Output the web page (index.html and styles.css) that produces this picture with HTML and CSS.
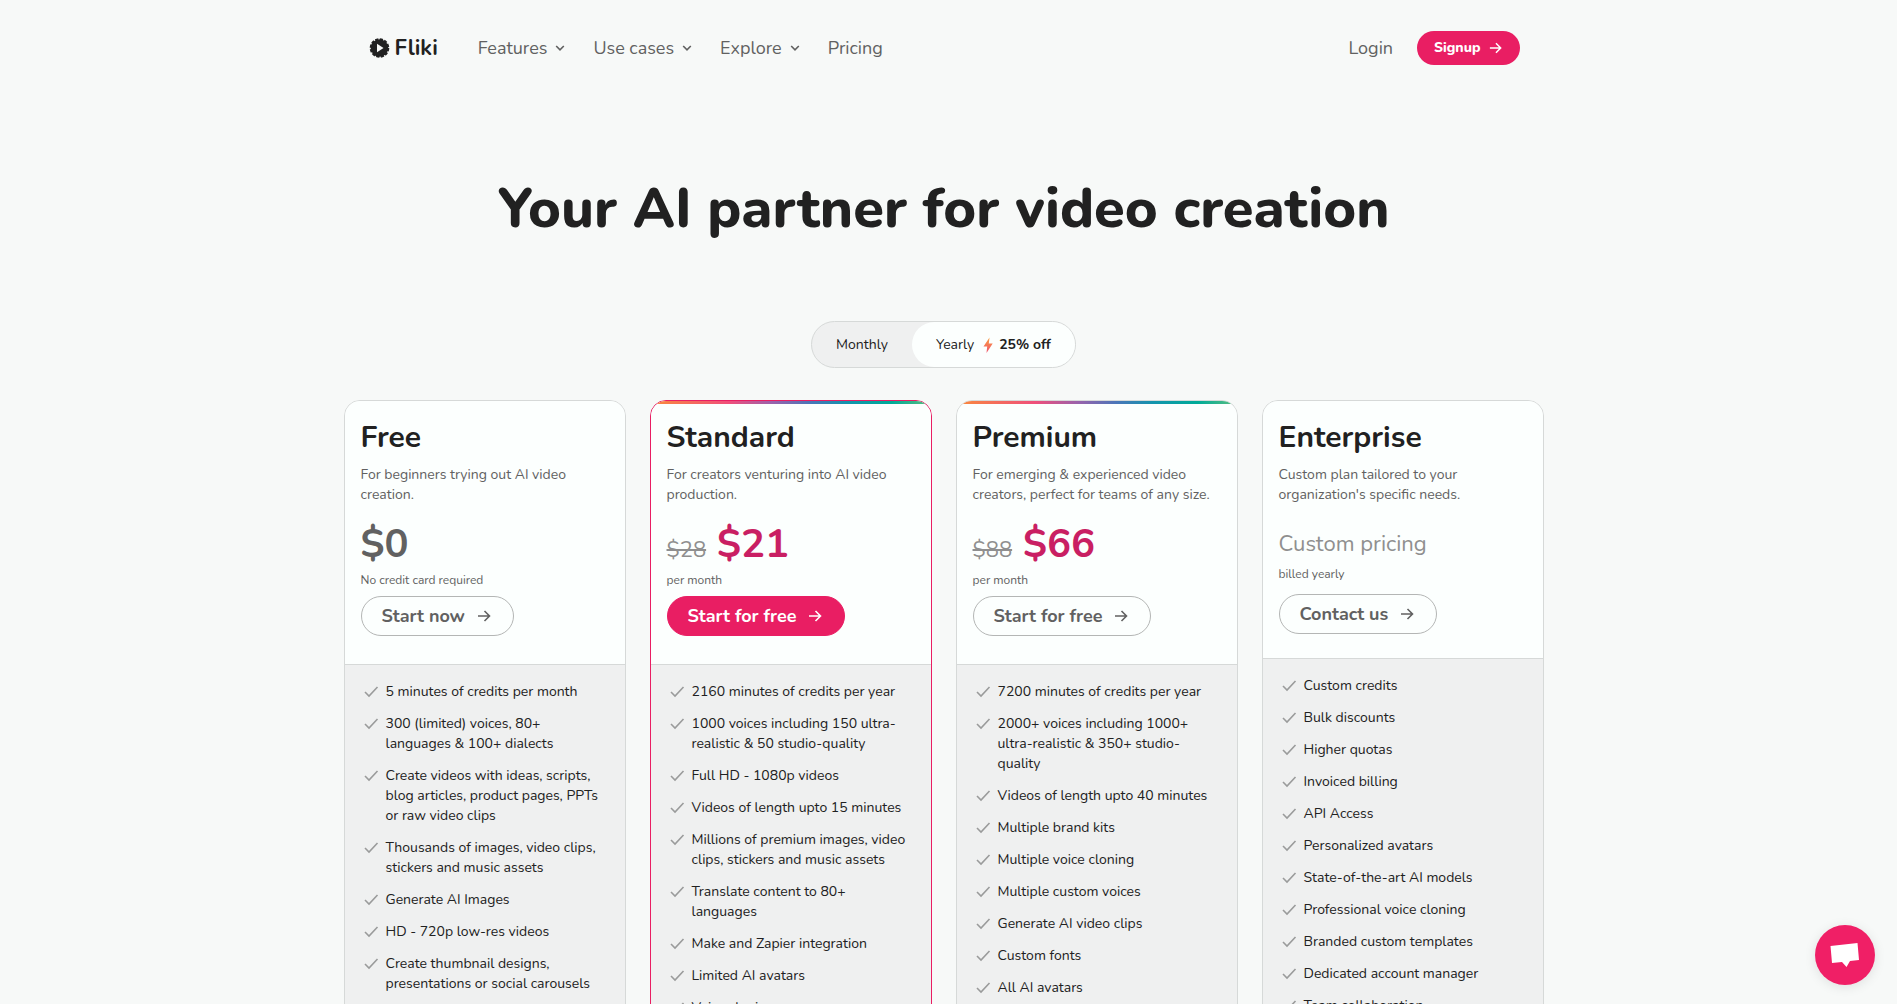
FILE: index.html
```html
<!DOCTYPE html>
<html lang="en">
<head>
  <meta charset="UTF-8">
  <title>Pricing - Fliki</title>
  <meta name="viewport" content="width=device-width, initial-scale=1.0">
  <link rel="stylesheet" href="styles.css">
</head>
<body>
  <!-- shared icons -->
  <svg class="sprite" aria-hidden="true">
    <symbol id="check" viewBox="0 0 20 20"><path d="M4 10 8 14 16.500 5" /></symbol>
    <symbol id="arrow" viewBox="0 0 16 16"><path d="M2 8H13.500M8.500 3l5 5-5 5" /></symbol>
    <symbol id="caret" viewBox="0 0 16 16"><path d="M4.200 6 8 9.800 11.800 6" /></symbol>
  </svg>

  <header class="header">
    <a class="logo" href="#">
      <svg viewBox="0 0 22 22" aria-hidden="true">
        <circle cx="11.500" cy="11" r="8.800" fill="#212121" />
        <circle cx="11.500" cy="11" r="8.800" fill="none" stroke="#212121" stroke-width="2" stroke-dasharray="3.200 1.408" />
        <path d="M9 6.800v8.400l6.500-4.200z" fill="#f7f9f8" />
      </svg>
      Fliki
    </a>
    <nav class="nav">
      <a href="#">Features <svg class="icon"><use href="#caret" /></svg></a>
      <a href="#">Use cases <svg class="icon"><use href="#caret" /></svg></a>
      <a href="#">Explore <svg class="icon"><use href="#caret" /></svg></a>
      <a href="#">Pricing</a>
    </nav>
    <div class="account">
      <a class="login" href="#">Login</a>
      <a class="signup" href="#">Signup <svg class="icon"><use href="#arrow" /></svg></a>
    </div>
  </header>

  <main>
    <h1>Your AI partner for video creation</h1>

    <div class="toggle">
      <button type="button" aria-pressed="false">Monthly</button>
      <button type="button" class="active" aria-pressed="true">
        Yearly
        <svg class="bolt" viewBox="0 0 10 16" aria-hidden="true">
          <defs>
            <linearGradient id="flame" x1="0" y1="0" x2="0" y2="1">
              <stop offset="0" stop-color="#f9a03f" />
              <stop offset="1" stop-color="#f0506e" />
            </linearGradient>
          </defs>
          <path d="M6.500 0.500 0.500 9.500H4.200L3.500 16 9.700 6.500H5.800z" fill="url(#flame)" />
        </svg>
        <b>25% off</b>
      </button>
    </div>

    <div class="plans">
      <section class="plan">
        <div class="plan-top">
          <h2>Free</h2>
          <p class="desc">For beginners trying out AI video creation.</p>
          <div class="price free">$0</div>
          <p class="note">No credit card required</p>
          <a class="btn" href="#">Start now <svg class="icon"><use href="#arrow" /></svg></a>
        </div>
        <ul class="features">
          <li><svg class="tick"><use href="#check" /></svg><span>5 minutes of credits per month</span></li>
          <li><svg class="tick"><use href="#check" /></svg><span>300 (limited) voices, 80+ languages &amp; 100+ dialects</span></li>
          <li><svg class="tick"><use href="#check" /></svg><span>Create videos with ideas, scripts, blog articles, product pages, PPTs or raw video clips</span></li>
          <li><svg class="tick"><use href="#check" /></svg><span>Thousands of images, video clips, stickers and music assets</span></li>
          <li><svg class="tick"><use href="#check" /></svg><span>Generate AI Images</span></li>
          <li><svg class="tick"><use href="#check" /></svg><span>HD - 720p low-res videos</span></li>
          <li><svg class="tick"><use href="#check" /></svg><span>Create thumbnail designs, presentations or social carousels</span></li>
        </ul>
      </section>

      <section class="plan featured">
        <div class="plan-top rainbow">
          <h2>Standard</h2>
          <p class="desc">For creators venturing into AI video production.</p>
          <div class="price"><s>$28</s> $21</div>
          <p class="note">per month</p>
          <a class="btn primary" href="#">Start for free <svg class="icon"><use href="#arrow" /></svg></a>
        </div>
        <ul class="features">
          <li><svg class="tick"><use href="#check" /></svg><span>2160 minutes of credits per year</span></li>
          <li><svg class="tick"><use href="#check" /></svg><span>1000 voices including 150 ultra-realistic &amp; 50 studio-quality</span></li>
          <li><svg class="tick"><use href="#check" /></svg><span>Full HD - 1080p videos</span></li>
          <li><svg class="tick"><use href="#check" /></svg><span>Videos of length upto 15 minutes</span></li>
          <li><svg class="tick"><use href="#check" /></svg><span>Millions of premium images, video clips, stickers and music assets</span></li>
          <li><svg class="tick"><use href="#check" /></svg><span>Translate content to 80+ languages</span></li>
          <li><svg class="tick"><use href="#check" /></svg><span>Make and Zapier integration</span></li>
          <li><svg class="tick"><use href="#check" /></svg><span>Limited AI avatars</span></li>
          <li><svg class="tick"><use href="#check" /></svg><span>Voice cloning</span></li>
        </ul>
      </section>

      <section class="plan">
        <div class="plan-top rainbow">
          <h2>Premium</h2>
          <p class="desc">For emerging &amp; experienced video creators, perfect for teams of any size.</p>
          <div class="price"><s>$88</s> $66</div>
          <p class="note">per month</p>
          <a class="btn" href="#">Start for free <svg class="icon"><use href="#arrow" /></svg></a>
        </div>
        <ul class="features">
          <li><svg class="tick"><use href="#check" /></svg><span>7200 minutes of credits per year</span></li>
          <li><svg class="tick"><use href="#check" /></svg><span>2000+ voices including 1000+ ultra-realistic &amp; 350+ studio-quality</span></li>
          <li><svg class="tick"><use href="#check" /></svg><span>Videos of length upto 40 minutes</span></li>
          <li><svg class="tick"><use href="#check" /></svg><span>Multiple brand kits</span></li>
          <li><svg class="tick"><use href="#check" /></svg><span>Multiple voice cloning</span></li>
          <li><svg class="tick"><use href="#check" /></svg><span>Multiple custom voices</span></li>
          <li><svg class="tick"><use href="#check" /></svg><span>Generate AI video clips</span></li>
          <li><svg class="tick"><use href="#check" /></svg><span>Custom fonts</span></li>
          <li><svg class="tick"><use href="#check" /></svg><span>All AI avatars</span></li>
        </ul>
      </section>

      <section class="plan custom">
        <div class="plan-top">
          <h2>Enterprise</h2>
          <p class="desc">Custom plan tailored to your organization's specific needs.</p>
          <div class="price">Custom pricing</div>
          <p class="note">billed yearly</p>
          <a class="btn" href="#">Contact us <svg class="icon"><use href="#arrow" /></svg></a>
        </div>
        <ul class="features">
          <li><svg class="tick"><use href="#check" /></svg><span>Custom credits</span></li>
          <li><svg class="tick"><use href="#check" /></svg><span>Bulk discounts</span></li>
          <li><svg class="tick"><use href="#check" /></svg><span>Higher quotas</span></li>
          <li><svg class="tick"><use href="#check" /></svg><span>Invoiced billing</span></li>
          <li><svg class="tick"><use href="#check" /></svg><span>API Access</span></li>
          <li><svg class="tick"><use href="#check" /></svg><span>Personalized avatars</span></li>
          <li><svg class="tick"><use href="#check" /></svg><span>State-of-the-art AI models</span></li>
          <li><svg class="tick"><use href="#check" /></svg><span>Professional voice cloning</span></li>
          <li><svg class="tick"><use href="#check" /></svg><span>Branded custom templates</span></li>
          <li><svg class="tick"><use href="#check" /></svg><span>Dedicated account manager</span></li>
          <li><svg class="tick"><use href="#check" /></svg><span>Team collaboration</span></li>
        </ul>
      </section>
    </div>
  </main>

  <button type="button" class="chat" aria-label="Open chat">
    <svg viewBox="0 0 30 26" aria-hidden="true"><path d="M0.500 4 27.500 1 29 18 20 19 16.500 25 12 20 2 21z" fill="#fff" /></svg>
  </button>
</body>
</html>
```
FILE: styles.css
```css
:root {
  --bg: #f7f9f8;
  --card: #fcfffe;
  --panel: #eff0f0;
  --line: #d6d9d8;
  --pink: #e91e63;
  --text: #212121;
  --muted: #616161;
}

* {
  box-sizing: border-box;
}

body {
  margin: 0;
  padding-right: 10px;
  height: 100vh;
  overflow: hidden;
  font-family: 'Nunito', 'Open Sans', sans-serif;
  font-size: 14px;
  line-height: 20px;
  background: var(--bg);
  color: var(--text);
}

a {
  color: inherit;
  text-decoration: none;
}

h1, h2, p, ul {
  margin: 0;
  padding: 0;
}

.sprite {
  display: none;
}

.icon, .tick {
  width: 16px;
  height: 16px;
  flex: none;
  fill: none;
  stroke: currentColor;
  stroke-width: 1.6;
}

/* header */
.header {
  display: flex;
  align-items: center;
  max-width: 1200px;
  height: 96px;
  margin: 0 auto;
  padding: 0 24px;
}

.logo {
  display: flex;
  align-items: center;
  gap: 5px;
  margin-right: 40px;
  font-size: 22px;
  font-weight: 700;
}

.logo svg {
  width: 22px;
  height: 22px;
}

.nav {
  display: flex;
  gap: 25px;
  font-size: 18px;
  color: var(--muted);
}

.nav a {
  display: flex;
  align-items: center;
  gap: 5px;
}

.account {
  display: flex;
  align-items: center;
  gap: 24px;
  margin-left: auto;
}

.login {
  font-size: 18px;
  color: var(--muted);
}

.signup {
  display: flex;
  align-items: center;
  gap: 7px;
  height: 34px;
  padding: 0 17px;
  border-radius: 17px;
  background: var(--pink);
  color: #fff;
  font-weight: 800;
}

.signup .icon {
  width: 15px;
}

/* hero */
h1 {
  margin: 81px 0 80px;
  font-size: 56px;
  font-weight: 800;
  line-height: 64px;
  text-align: center;
}

.toggle {
  display: flex;
  width: fit-content;
  height: 47px;
  margin: 0 auto 32px;
  border: 1px solid var(--line);
  border-radius: 24px;
  background: var(--panel);
}

.toggle button {
  display: flex;
  align-items: center;
  padding: 0 24px;
  border: 0;
  border-radius: 24px;
  background: none;
  color: var(--text);
  font: inherit;
  cursor: pointer;
}

.toggle .active {
  background: var(--card);
}

.bolt {
  width: 10px;
  height: 16px;
  margin: 0 6px 0 9px;
}

/* plans */
.plans {
  display: grid;
  grid-template-columns: repeat(4, 1fr);
  align-items: start;
  gap: 24px;
  max-width: 1200px;
  margin: 0 auto;
}

.plan {
  min-height: 640px;
  border: 1px solid var(--line);
  border-radius: 16px;
  background: var(--panel);
  overflow: hidden;
}

.featured {
  border-color: var(--pink);
}

.plan-top {
  padding: 18px 16px 28px;
  border-bottom: 1px solid var(--line);
  background: var(--card);
}

.rainbow {
  background: linear-gradient(90deg, #f98b3c, #ef4f7b 28%, #9a62ab 43%, #4a76b8 57%, #1394ad 70%, #00ab98 86%, #5dbd80) top / 100% 3px no-repeat var(--card);
}

h2 {
  font-size: 30px;
  font-weight: 700;
  line-height: 38px;
}

.desc {
  margin: 8px 0 12px;
  color: var(--muted);
}

.price {
  display: flex;
  align-items: baseline;
  gap: 11px;
  font-size: 40px;
  font-weight: 700;
  line-height: 55px;
  color: #c91f63;
}

.price s {
  font-size: 22px;
  font-weight: 400;
  line-height: 24px;
  color: #8f8f8f;
}

.price.free {
  color: var(--muted);
}

.note {
  margin-bottom: 8px;
  font-size: 12px;
  line-height: 16px;
  color: var(--muted);
}

.btn {
  display: flex;
  align-items: center;
  gap: 11px;
  width: fit-content;
  height: 40px;
  padding: 0 21px 0 20px;
  border: 1px solid #b4b6b5;
  border-radius: 20px;
  color: var(--muted);
  font-size: 18px;
  font-weight: 700;
}

.btn.primary {
  border-color: var(--pink);
  background: var(--pink);
  color: #fff;
}

.custom .plan-top {
  padding-bottom: 24px;
}

.custom .price {
  margin-bottom: -6px;
  font-size: 22px;
  font-weight: 400;
  color: #8f8f8f;
}

.custom .note {
  margin-bottom: 12px;
}

.features {
  display: flex;
  flex-direction: column;
  gap: 12px;
  padding: 17px 16px;
  list-style: none;
}

.features li {
  display: flex;
  gap: 5px;
}

.tick {
  width: 20px;
  height: 20px;
  color: #9a9b9b;
}

/* chat launcher */
.chat {
  position: fixed;
  right: 22px;
  bottom: 19px;
  display: flex;
  align-items: center;
  justify-content: center;
  width: 60px;
  height: 60px;
  padding: 0;
  border: 0;
  border-radius: 50%;
  background: #f01f66;
  box-shadow: 0 2px 12px rgba(0, 0, 0, 0.1);
}

.chat svg {
  width: 30px;
  height: 26px;
}
```
